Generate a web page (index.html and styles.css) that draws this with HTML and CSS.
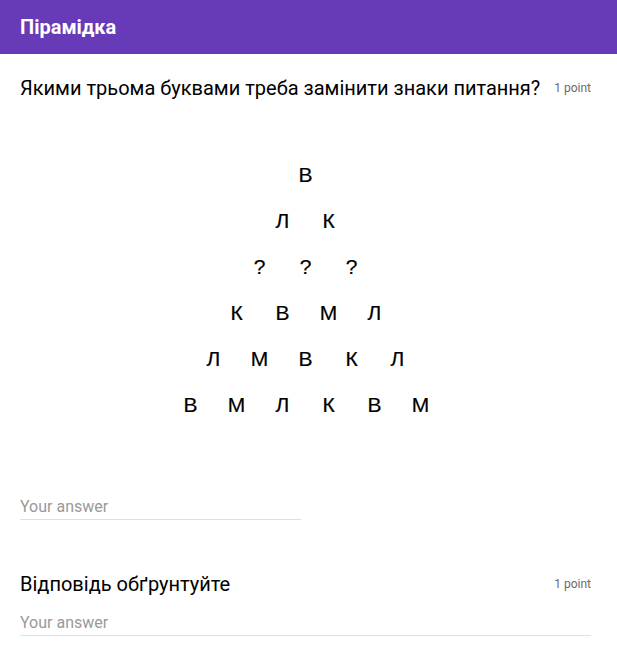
FILE: index.html
```html
<!DOCTYPE html>
<html lang="uk">
<head>
<meta charset="utf-8">
<link rel="stylesheet" href="styles.css">
</head>
<body>
<header class="bar"><h1 class="title">Пірамідка</h1></header>
<main class="form">
  <section class="question">
    <div class="q-head">
      <h2 class="q-text">Якими трьома буквами треба замінити знаки питання?</h2>
      <span class="points">1 point</span>
    </div>
    <div class="pyramid">
      <div class="row"><span>В</span></div>
      <div class="row"><span>Л</span><span>К</span></div>
      <div class="row"><span>?</span><span>?</span><span>?</span></div>
      <div class="row"><span>К</span><span>В</span><span>М</span><span>Л</span></div>
      <div class="row"><span>Л</span><span>М</span><span>В</span><span>К</span><span>Л</span></div>
      <div class="row"><span>В</span><span>М</span><span>Л</span><span>К</span><span>В</span><span>М</span></div>
    </div>
    <div class="answer short">Your answer</div>
  </section>
  <section class="question second">
    <div class="q-head">
      <h2 class="q-text">Відповідь обґрунтуйте</h2>
      <span class="points">1 point</span>
    </div>
    <div class="answer long">Your answer</div>
  </section>
</main>
</body>
</html>
```
FILE: styles.css
```css
html, body {
  margin: 0;
  padding: 0;
  background: #fff;
  font-family: Roboto, "Noto Sans", sans-serif;
}
.bar {
  background: #673ab7;
  height: 54px;
  display: flex;
  align-items: center;
  padding: 0 20px;
}
.title {
  margin: 0;
  color: #fff;
  font-size: 20px;
  font-weight: 700;
  line-height: 24px;
}
.form {
  padding: 0 26px 0 20px;
}
.question {
  padding-top: 23px;
}
.q-head {
  display: flex;
  justify-content: space-between;
  align-items: center;
}
.q-text {
  margin: 0;
  font-size: 20px;
  font-weight: 400;
  color: #000;
  line-height: 22px;
}
.points {
  font-size: 12px;
  color: #6b6b6b;
}
.pyramid {
  padding-top: 64px;
  font-family: "Liberation Sans", Arial, sans-serif;
  font-size: 21px;
  color: #000;
  -webkit-text-stroke: 0.2px #000;
}
.row {
  display: flex;
  justify-content: center;
  height: 46px;
  line-height: 24px;
}
.row span {
  width: 46px;
  text-align: center;
}
.answer {
  margin-top: 59px;
  font-size: 16px;
  color: #999;
  line-height: 18px;
  padding-bottom: 3px;
  border-bottom: 1px solid #e0e0e0;
}
.short {
  width: 281px;
}
.second {
  padding-top: 53px;
}
.second .answer {
  margin-top: 19px;
}
```
